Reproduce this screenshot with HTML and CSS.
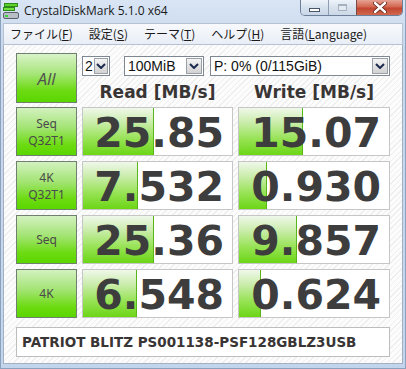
FILE: index.html
```html
<!DOCTYPE html>
<html>
<head>
<meta charset="utf-8">
<link rel="stylesheet" href="styles.css">
</head>
<body>
<div class="window">
  <div class="titlebar">
    <svg class="app-icon" width="16" height="16" viewBox="0 0 16 16">
      <rect x="1.5" y="0.5" width="13" height="3" fill="#5fd12c" stroke="#2f8a1c"/>
      <rect x="0.5" y="4.5" width="11" height="3" fill="#74e23e" stroke="#2f8a1c"/>
      <rect x="0.5" y="9.5" width="15" height="6" rx="1.5" fill="#b9bec6" stroke="#59606a"/>
      <rect x="2" y="12" width="3" height="2" fill="#3fd23f"/>
    </svg>
    <span class="title">CrystalDiskMark 5.1.0 x64</span>
    <div class="caption">
      <div class="cbtn cmin"><span class="min-glyph"></span></div>
      <div class="cbtn cmax"><span class="max-glyph"></span></div>
      <div class="cbtn cclose">
        <svg width="14" height="11" viewBox="0 0 14 11">
          <path d="M2 1 L12 10 M12 1 L2 10" stroke="#5a1e16" stroke-width="4" stroke-linecap="round"/>
          <path d="M2 1 L12 10 M12 1 L2 10" stroke="#ffffff" stroke-width="2.4" stroke-linecap="round"/>
        </svg>
      </div>
    </div>
  </div>
  <div class="menubar">
    <span class="mi">ファイル(<u>F</u>)</span>
    <span class="mi">設定(<u>S</u>)</span>
    <span class="mi">テーマ(<u>T</u>)</span>
    <span class="mi">ヘルプ(<u>H</u>)</span>
    <span class="mi">言語(<u>L</u>anguage)</span>
  </div>
  <div class="client">
    <div class="top">
      <div class="all">All</div>
      <div class="top-right">
        <div class="controls">
          <div class="sel s-count"><span class="stxt">2</span><span class="sbtn"><svg width="10" height="6" viewBox="0 0 10 6"><path d="M1 1 L5 5 L9 1" fill="none" stroke="#1b2a4e" stroke-width="2"/></svg></span></div>
          <div class="sel s-size"><span class="stxt">100MiB</span><span class="sbtn"><svg width="10" height="6" viewBox="0 0 10 6"><path d="M1 1 L5 5 L9 1" fill="none" stroke="#1b2a4e" stroke-width="2"/></svg></span></div>
          <div class="sel s-drive"><span class="stxt">P: 0% (0/115GiB)</span><span class="sbtn"><svg width="10" height="6" viewBox="0 0 10 6"><path d="M1 1 L5 5 L9 1" fill="none" stroke="#1b2a4e" stroke-width="2"/></svg></span></div>
        </div>
        <div class="headers">
          <div class="hdr hread">Read [MB/s]</div>
          <div class="hdr hwrite">Write [MB/s]</div>
        </div>
      </div>
    </div>
    <div class="rows">
      <div class="row">
        <div class="label"><span>Seq</span><span>Q32T1</span></div>
        <div class="val vread"><div class="bar" style="width:71px"></div><div class="num">25.85</div></div>
        <div class="val vwrite"><div class="bar" style="width:64px"></div><div class="num">15.07</div></div>
      </div>
      <div class="row">
        <div class="label"><span>4K</span><span>Q32T1</span></div>
        <div class="val vread"><div class="bar" style="width:55px"></div><div class="num">7.532</div></div>
        <div class="val vwrite"><div class="bar" style="width:28px"></div><div class="num">0.930</div></div>
      </div>
      <div class="row">
        <div class="label"><span>Seq</span></div>
        <div class="val vread"><div class="bar" style="width:71px"></div><div class="num">25.36</div></div>
        <div class="val vwrite"><div class="bar" style="width:58px"></div><div class="num">9.857</div></div>
      </div>
      <div class="row">
        <div class="label"><span>4K</span></div>
        <div class="val vread"><div class="bar" style="width:54px"></div><div class="num">6.548</div></div>
        <div class="val vwrite"><div class="bar" style="width:22px"></div><div class="num">0.624</div></div>
      </div>
    </div>
    <div class="device">PATRIOT BLITZ PS001138-PSF128GBLZ3USB</div>
  </div>
</div>
</body>
</html>
```
FILE: styles.css
```css
* { box-sizing: border-box; }
html, body { margin: 0; padding: 0; }
body { width: 406px; height: 369px; overflow: hidden; background: #c6d7ed; }

.window {
  width: 406px;
  height: 369px;
  display: flex;
  flex-direction: column;
  background: linear-gradient(#d9e5f4, #c9d9ee 40px, #c3d5ec);
  border-left: 1px solid #8ba2bf;
  border-right: 1px solid #8ba2bf;
  border-bottom: 1px solid #8ba2bf;
}

.titlebar {
  height: 23px;
  display: flex;
  align-items: flex-start;
  flex: none;
}
.app-icon { margin: 3px 0 0 2px; flex: none; }
.title {
  margin: 3px 0 0 5px;
  font-family: "Open Sans", "Noto Sans", sans-serif;
  font-size: 12px;
  line-height: 16px;
  color: #1a1a1a;
}
.caption {
  margin-left: auto;
  margin-right: 2px;
  display: flex;
  height: 16px;
  border: 1px solid #6c7e98;
  border-top: none;
  border-radius: 0 0 5px 5px;
  overflow: hidden;
}
.cbtn {
  height: 15px;
  display: flex;
  align-items: center;
  justify-content: center;
}
.cmin {
  width: 28px;
  background: linear-gradient(#eef3fa, #d6e1ee 50%, #c9d6e7);
  border-right: 1px solid #8e9db2;
  align-items: flex-end;
  padding-bottom: 3px;
}
.min-glyph {
  width: 11px;
  height: 4px;
  background: #ffffff;
  border: 1px solid #4a5668;
}
.cmax {
  width: 28px;
  background: linear-gradient(#eef3fa, #d8e2ee 50%, #ccd8e8);
  border-right: 1px solid #7a4a44;
}
.max-glyph {
  width: 9px;
  height: 7px;
  border: 1px solid #a6b1c0;
  border-top-width: 2px;
  background: #e4eaf2;
}
.cclose {
  width: 45px;
  background: linear-gradient(#e6a395, #d3664f 45%, #c24630 55%, #d0694f);
}

.menubar {
  margin: 0 2px;
  height: 22px;
  flex: none;
  display: flex;
  align-items: center;
  gap: 16px;
  padding-left: 6px;
  background: linear-gradient(#f7f9fc, #e9eef6);
  border: 1px solid #b6c2d2;
  font-family: "Noto Sans CJK JP", sans-serif;
  font-size: 12px;
  color: #1a1a1a;
}
.mi { line-height: 16px; white-space: nowrap; }
.mi u { text-decoration-thickness: 1px; text-underline-offset: 1px; }

.client {
  margin: 0 2px;
  height: 319px;
  flex: none;
  border: 1px solid #a3b0c2;
  border-top: none;
  background-color: #fbfbfb;
  background-image: repeating-linear-gradient(135deg, #fcfcfc 0px, #fcfcfc 3px, #eeeeee 3px, #eeeeee 4px);
  padding: 8px 0 0 12px;
  display: flex;
  flex-direction: column;
}

.top { display: flex; gap: 5px; height: 50px; }
.all {
  width: 61px;
  height: 50px;
  border: 1px solid #6f806f;
  background: linear-gradient(#d9f3c9, #a8e67c 40%, #6edb14 75%, #5ad600);
  display: flex;
  align-items: center;
  justify-content: center;
  font-family: "Open Sans", "Liberation Sans", sans-serif;
  font-style: italic;
  font-size: 17px;
  color: #505050;
}
.top-right { width: 308px; display: flex; flex-direction: column; }
.controls { display: flex; height: 20px; margin-top: 3px; }
.sel {
  height: 20px;
  border: 1px solid #7f8792;
  background: #ffffff;
  display: flex;
  align-items: center;
  font-family: "Liberation Sans", Arial, sans-serif;
  font-size: 14px;
  color: #111;
}
.stxt { flex: 1; padding-left: 3px; white-space: nowrap; overflow: hidden; line-height: 18px; }
.sbtn {
  width: 16px;
  height: 16px;
  margin-right: 1px;
  border: 1px solid #9aa0a8;
  background: linear-gradient(#f4f4f4, #e2e2e2 50%, #d2d2d2);
  display: flex;
  align-items: center;
  justify-content: center;
  flex: none;
}
.s-count { width: 28px; }
.s-count .stxt { padding-left: 2px; }
.s-count .sbtn { width: 14px; }
.s-size { width: 80px; margin-left: 14px; }
.s-drive { width: 180px; margin-left: 6px; }

.headers { display: flex; gap: 5px; height: 27px; }
.hdr {
  text-align: center;
  font-family: "DejaVu Sans", Verdana, sans-serif;
  font-weight: bold;
  font-size: 17px;
  line-height: 20px;
  padding-top: 6px;
  color: #3a3535;
}
.hread { width: 151px; }
.hwrite { width: 152px; }

.rows { display: flex; flex-direction: column; gap: 5px; margin-top: 4px; }
.row { display: flex; gap: 5px; height: 49px; }
.label {
  width: 61px;
  border: 1px solid #6f806f;
  background: linear-gradient(#d3f1c0, #a3e474 42%, #6ddb12 78%, #5ad600);
  display: flex;
  flex-direction: column;
  align-items: center;
  justify-content: center;
  font-family: "Noto Sans", "Open Sans", sans-serif;
  font-size: 12px;
  color: #4a4a4a;
}
.label span { line-height: 17px; display: block; }
.val {
  position: relative;
  border: 1px solid #c6c6c6;
  background: #ffffff;
  overflow: hidden;
}
.vread { width: 151px; }
.vwrite { width: 152px; }
.bar {
  position: absolute;
  left: 0;
  top: 0;
  bottom: 0;
  background: linear-gradient(#f0f8ea, #c8eca8 32%, #94e250 68%, #6cd616);
  border-right: 1px solid #58b61a;
}
.num {
  position: relative;
  text-align: right;
  padding-right: 8px;
  padding-top: 2px;
  font-family: "DejaVu Sans", Verdana, sans-serif;
  font-weight: bold;
  font-size: 41px;
  line-height: 47px;
  color: #3d3d3d;
  white-space: nowrap;
}

.device {
  margin-top: 9px;
  width: 374px;
  height: 30px;
  border: 1px solid #bdbdbd;
  background: #ffffff;
  padding-left: 5px;
  display: flex;
  align-items: center;
  font-family: "DejaVu Sans", Verdana, sans-serif;
  font-weight: bold;
  font-size: 13.5px;
  color: #3a3535;
  white-space: nowrap;
}
```
